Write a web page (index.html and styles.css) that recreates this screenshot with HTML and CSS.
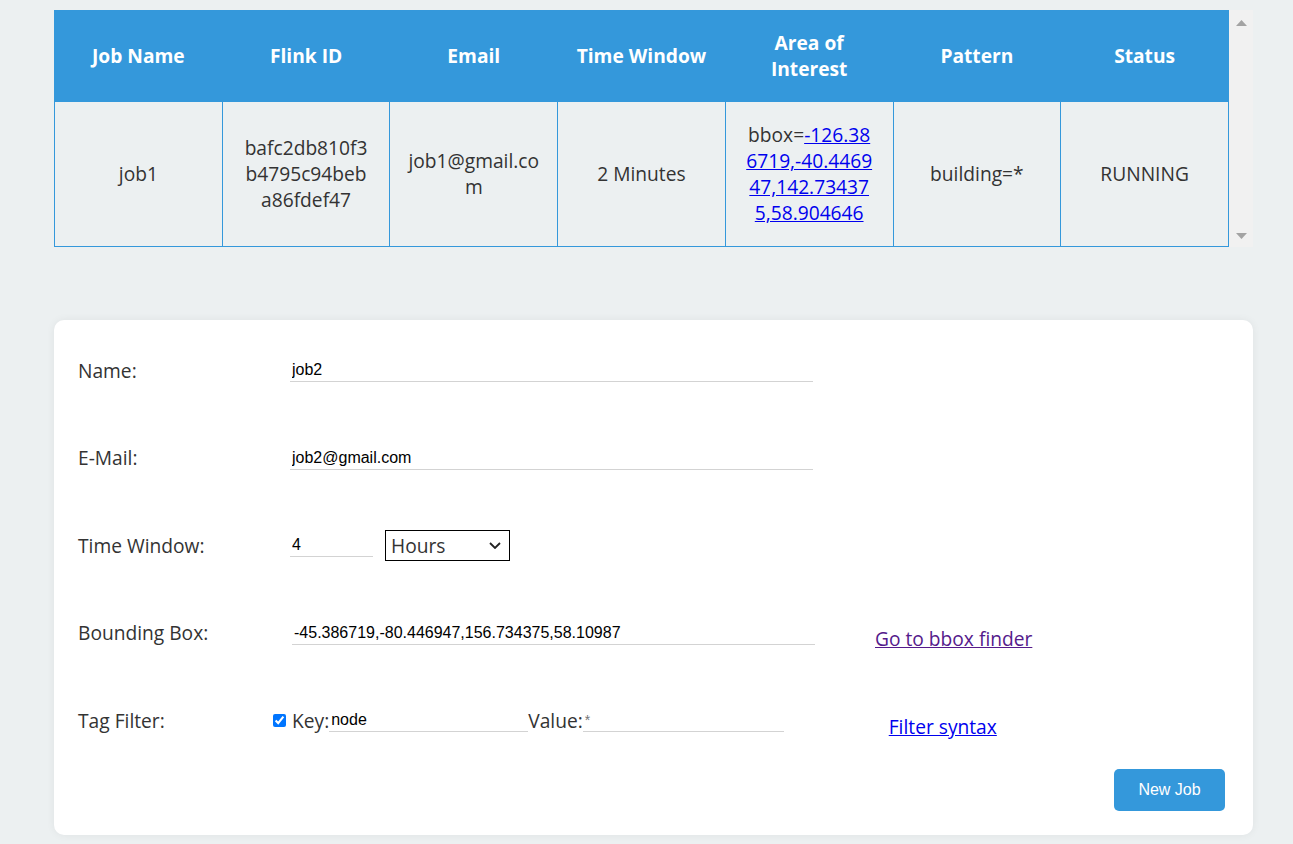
FILE: index.html
```html
<!DOCTYPE html>
<html lang="en">
<head>
<meta charset="utf-8">
<title>Jobs</title>
<link rel="stylesheet" href="styles.css">
</head>
<body>
<div class="page">
  <div class="jobs">
    <table class="jobs-table">
      <thead>
        <tr>
          <th>Job Name</th>
          <th>Flink ID</th>
          <th>Email</th>
          <th>Time Window</th>
          <th>Area of Interest</th>
          <th>Pattern</th>
          <th>Status</th>
        </tr>
      </thead>
      <tbody>
        <tr>
          <td>job1</td>
          <td class="brk">bafc2db810f3<br>b4795c94beb<br>a86fdef47</td>
          <td class="brk">job1@gmail.com</td>
          <td>2 Minutes</td>
          <td class="brk">bbox=<a class="link" href="#">-126.386719,-40.446947,142.734375,58.904646</a></td>
          <td>building=*</td>
          <td>RUNNING</td>
        </tr>
      </tbody>
    </table>
    <div class="scrollbar">
      <svg class="arrow" width="11" height="6" viewBox="0 0 11 6"><polygon points="5.5,0 11,6 0,6" fill="#a3a3a3"/></svg>
      <svg class="arrow" width="11" height="6" viewBox="0 0 11 6"><polygon points="0,0 11,0 5.5,6" fill="#a3a3a3"/></svg>
    </div>
  </div>

  <form class="card">
    <div class="row">
      <span class="label">Name:</span>
      <input class="field field-wide" type="text" value="job2">
    </div>
    <div class="row">
      <span class="label">E-Mail:</span>
      <input class="field field-wide" type="text" value="job2@gmail.com">
    </div>
    <div class="row">
      <span class="label">Time Window:</span>
      <input class="field field-num" type="text" value="4">
      <span class="select-wrap">
        <select class="select">
          <option>Hours</option>
          <option>Minutes</option>
          <option>Days</option>
        </select>
        <svg class="chevron" width="12" height="7" viewBox="0 0 12 7"><polyline points="1,1 6,6 11,1" fill="none" stroke="#222" stroke-width="1.8"/></svg>
      </span>
    </div>
    <div class="row">
      <span class="label">Bounding Box:</span>
      <input class="field field-wide field-bbox" type="text" value="-45.386719,-80.446947,156.734375,58.10987">
      <a class="side-link visited" href="#">Go to bbox finder</a>
    </div>
    <div class="row">
      <span class="label label-short">Tag Filter:</span>
      <input class="check" type="checkbox" checked>
      <span class="inline-label key-label">Key:</span>
      <input class="field field-key" type="text" value="node">
      <span class="inline-label">Value:</span>
      <input class="field field-value" type="text" placeholder="*">
      <a class="side-link filter-link" href="#">Filter syntax</a>
    </div>
    <div class="actions">
      <button class="btn" type="button">New Job</button>
    </div>
  </form>
</div>
</body>
</html>
```

FILE: styles.css
```css
html, body {
  margin: 0;
  padding: 0;
  background: #ecf0f1;
}

body {
  font-family: "Open Sans", "Noto Sans", sans-serif;
  color: #333;
}

.page {
  width: 1199px;
  padding: 10px 0 10px 54px;
}

.jobs {
  display: flex;
  align-items: stretch;
}

.jobs-table {
  width: 1175px;
  border-collapse: collapse;
  table-layout: fixed;
  font-size: 19.2px;
  line-height: 26px;
  text-align: center;
}

.jobs-table th {
  background: #3498db;
  color: #fff;
  font-weight: 700;
  padding: 19px 17px;
  border: 1px solid #3498db;
}

.jobs-table td {
  background: #ecf0f1;
  border: 1px solid #3498db;
  padding: 20px 17px;
  color: #333;
  vertical-align: middle;
}

.jobs-table td.brk {
  word-break: break-all;
}

.link {
  color: #0000ee;
  text-decoration: underline;
}

.scrollbar {
  width: 24px;
  background: #f1f1f1;
  display: flex;
  flex-direction: column;
  justify-content: space-between;
  align-items: center;
  padding: 10px 0 8px;
  box-sizing: border-box;
}

.arrow {
  display: block;
}

.card {
  margin: 73px 0 0;
  background: #fff;
  border-radius: 10px;
  box-shadow: 0 0 8px rgba(0, 0, 0, 0.06);
  padding: 28px 28px 24px 24px;
  display: flex;
  flex-direction: column;
  gap: 43.5px;
}

.row {
  display: flex;
  align-items: center;
  height: 44px;
}

.label {
  width: 212px;
  flex: none;
  font-size: 19.2px;
  color: #333;
}

.label-short {
  width: 195px;
}

.field {
  box-sizing: border-box;
  height: 24px;
  border: 0;
  border-bottom: 1px solid #d3d3d3;
  padding: 2px 2px 1px;
  font-family: "Liberation Sans", Arial, sans-serif;
  font-size: 16px;
  color: #000;
  background: transparent;
  outline: none;
}

.field::placeholder {
  color: #757575;
  font-size: 14px;
}

.field-wide {
  width: 523px;
}

.field-bbox {
  margin-left: 2px;
}

.field-num {
  width: 83px;
}

.select-wrap {
  position: relative;
  margin-left: 12px;
  display: inline-block;
}

.select {
  -webkit-appearance: none;
  appearance: none;
  width: 125px;
  height: 31px;
  box-sizing: border-box;
  border: 1px solid #000;
  border-radius: 0;
  background: #fff;
  font-family: "Open Sans", "Noto Sans", sans-serif;
  font-size: 19.2px;
  color: #333;
  padding: 0 5px;
  display: block;
}

.chevron {
  position: absolute;
  right: 9px;
  top: 12px;
  pointer-events: none;
}

.side-link {
  font-size: 19.2px;
  color: #0000ee;
  text-decoration: underline;
  margin-top: 12px;
}

.side-link.visited {
  color: #551a8b;
  margin-left: 60px;
}

.filter-link {
  margin-left: 105px;
}

.check {
  width: 13px;
  height: 13px;
  margin: 0;
  accent-color: #0075ff;
}

.inline-label {
  font-size: 19.2px;
  color: #333;
}

.key-label {
  margin-left: 6px;
}

.field-key {
  width: 199px;
}

.field-value {
  width: 201px;
}

.actions {
  display: flex;
  justify-content: flex-end;
  margin-top: -16.5px;
}

.btn {
  width: 111px;
  height: 42px;
  border: 0;
  border-radius: 5px;
  background: #3498db;
  color: #fff;
  font-family: "Liberation Sans", Arial, sans-serif;
  font-size: 16px;
}
```
